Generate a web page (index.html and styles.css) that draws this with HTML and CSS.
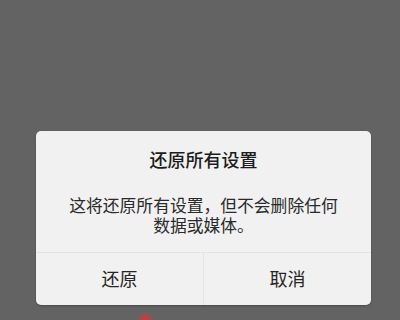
FILE: index.html
```html
<!DOCTYPE html>
<html lang="zh-CN">
<head>
<meta charset="utf-8">
<link rel="stylesheet" href="styles.css">
</head>
<body>
<div class="screen">
  <div class="dialog">
    <div class="title">还原所有设置</div>
    <div class="message">
      <div class="line">这将还原所有设置，但不会删除任何</div>
      <div class="line">数据或媒体。</div>
    </div>
    <div class="actions">
      <div class="btn">还原</div>
      <div class="btn">取消</div>
    </div>
  </div>
  <div class="dot"></div>
</div>
</body>
</html>
```
FILE: styles.css
```css
html, body {
  margin: 0;
  padding: 0;
  background: #636363;
}
.screen {
  position: relative;
  width: 400px;
  height: 320px;
  overflow: hidden;
  padding-top: 131px;
  box-sizing: border-box;
  font-family: "Noto Sans CJK SC", "Noto Sans", sans-serif;
}
.dialog {
  margin-left: 36px;
  width: 335px;
  height: 174px;
  background: #f1f1f1;
  border-radius: 5px;
  box-shadow: 0 1px 2px rgba(0,0,0,0.25);
  display: flex;
  flex-direction: column;
  overflow: hidden;
}
.title {
  padding-top: 16px;
  font-size: 18px;
  line-height: 24px;
  font-weight: 500;
  color: #1c1c1c;
  text-align: center;
}
.message {
  margin-top: 24px;
  padding-bottom: 17px;
  font-size: 16.8px;
  color: #2a2a2a;
  text-align: center;
  border-bottom: 1px solid #e4e4e4;
}
.line {
  line-height: 20px;
  height: 20px;
}
.actions {
  flex: 1;
  display: flex;
}
.btn {
  flex: 1;
  display: flex;
  align-items: center;
  justify-content: center;
  font-size: 18px;
  color: #262626;
  padding-bottom: 2px;
}
.btn + .btn {
  border-left: 1px solid #e4e4e4;
}
.dot {
  position: absolute;
  left: 137px;
  top: 312px;
  width: 16px;
  height: 16px;
  border-radius: 50%;
  background: radial-gradient(circle, #e0303a 0%, rgba(200,60,70,0.6) 45%, rgba(99,99,99,0) 75%);
}
```
